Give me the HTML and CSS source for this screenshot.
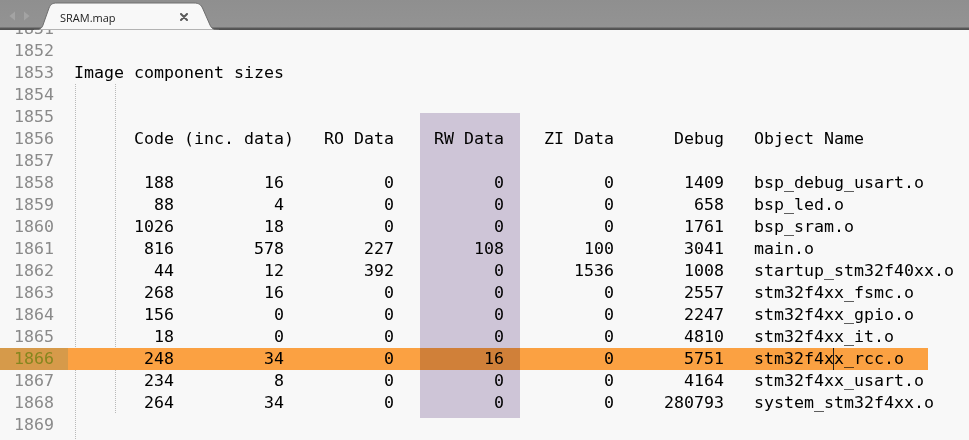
FILE: index.html
```html
<!DOCTYPE html>
<html lang="en">
<head>
<meta charset="utf-8">
<title>SRAM.map</title>
<link rel="stylesheet" href="styles.css">
</head>
<body>
<div class="window">
  <div class="tabbar">
    <div class="nav">
      <svg width="34" height="28" viewBox="0 0 34 28"><path d="M15 11.5 L9.5 16 L15 20.5 Z" fill="#a3a3a3"/><path d="M24 11.5 L29.5 16 L24 20.5 Z" fill="#a3a3a3"/></svg>
    </div>
    <div class="tab">
      <svg class="tab-shape" width="188" height="30" viewBox="0 0 188 30"><path d="M0,30 C6,30 8,28 9,25 L15,8 C16.5,4.5 18,3 23,3 L160,3 C165,3 167,5 168.5,8 L176,25 C177.5,28 179,30 185,30 Z" fill="#f8f8f8" stroke="#6e6e6e" stroke-width="1"/></svg>
      <span class="tab-title">SRAM.map</span>
      <svg class="tab-close" width="8" height="8" viewBox="0 0 8 8"><path d="M1 1 L7 7 M7 1 L1 7" stroke="#5a5a5a" stroke-width="2" stroke-linecap="round"/></svg>
    </div>
  </div>
  <div class="editor">
    <div class="lines">
      <div class="line"><span class="ln">1851</span><span class="code"></span></div>
      <div class="line"><span class="ln">1852</span><span class="code"></span></div>
      <div class="line"><span class="ln">1853</span><span class="code">Image component sizes</span></div>
      <div class="line"><span class="ln">1854</span><span class="code g2"></span></div>
      <div class="line"><span class="ln">1855</span><span class="code g2"></span></div>
      <div class="line"><span class="ln">1856</span><span class="code g2">      Code (inc. data)   RO Data    RW Data    ZI Data      Debug   Object Name</span></div>
      <div class="line"><span class="ln">1857</span><span class="code g2"></span></div>
      <div class="line"><span class="ln">1858</span><span class="code g2 row"><span>188</span><span>16</span><span>0</span><span>0</span><span>0</span><span>1409</span><span class="name">bsp_debug_usart.o</span></span></div>
      <div class="line"><span class="ln">1859</span><span class="code g2 row"><span>88</span><span>4</span><span>0</span><span>0</span><span>0</span><span>658</span><span class="name">bsp_led.o</span></span></div>
      <div class="line"><span class="ln">1860</span><span class="code g2 row"><span>1026</span><span>18</span><span>0</span><span>0</span><span>0</span><span>1761</span><span class="name">bsp_sram.o</span></span></div>
      <div class="line"><span class="ln">1861</span><span class="code g2 row"><span>816</span><span>578</span><span>227</span><span>108</span><span>100</span><span>3041</span><span class="name">main.o</span></span></div>
      <div class="line"><span class="ln">1862</span><span class="code g2 row"><span>44</span><span>12</span><span>392</span><span>0</span><span>1536</span><span>1008</span><span class="name">startup_stm32f40xx.o</span></span></div>
      <div class="line"><span class="ln">1863</span><span class="code g2 row"><span>268</span><span>16</span><span>0</span><span>0</span><span>0</span><span>2557</span><span class="name">stm32f4xx_fsmc.o</span></span></div>
      <div class="line"><span class="ln">1864</span><span class="code g2 row"><span>156</span><span>0</span><span>0</span><span>0</span><span>0</span><span>2247</span><span class="name">stm32f4xx_gpio.o</span></span></div>
      <div class="line"><span class="ln">1865</span><span class="code g2 row"><span>18</span><span>0</span><span>0</span><span>0</span><span>0</span><span>4810</span><span class="name">stm32f4xx_it.o</span></span></div>
      <div class="line hl"><span class="ln">1866</span><span class="code row"><span>248</span><span>34</span><span>0</span><span>16</span><span>0</span><span>5751</span><span class="name">stm32f4x<span class="caret"></span>x_rcc.o</span></span></div>
      <div class="line"><span class="ln">1867</span><span class="code g2 row"><span>234</span><span>8</span><span>0</span><span>0</span><span>0</span><span>4164</span><span class="name">stm32f4xx_usart.o</span></span></div>
      <div class="line"><span class="ln">1868</span><span class="code g2 row"><span>264</span><span>34</span><span>0</span><span>0</span><span>0</span><span>280793</span><span class="name">system_stm32f4xx.o</span></span></div>
      <div class="line"><span class="ln">1869</span><span class="code g1"></span></div>
      <div class="line"><span class="ln"></span><span class="code g1"></span></div>
    </div>
    <div class="col-mark"></div>
  </div>
</div>
</body>
</html>
```
FILE: styles.css
```css
html, body {
  margin: 0;
  padding: 0;
  background: #f8f8f8;
}

.window {
  width: 969px;
  height: 440px;
  overflow: hidden;
  display: flex;
  flex-direction: column;
  background: #f8f8f8;
}

.tabbar {
  flex: 0 0 30px;
  height: 30px;
  display: flex;
  align-items: flex-end;
  background: linear-gradient(to bottom, #8f8f8f 0, #939393 27px, #5a5a5a 28px, #4e4e4e 30px);
}

.nav {
  width: 34px;
  height: 30px;
  flex: 0 0 34px;
}

.nav svg {
  display: block;
}

.tab {
  position: relative;
  width: 188px;
  height: 30px;
  flex: 0 0 188px;
  display: flex;
  align-items: center;
  box-sizing: border-box;
  padding: 4px 34px 0 26px;
}

.tab-shape {
  position: absolute;
  left: 0;
  top: 0;
}

.tab-title {
  position: relative;
  font-family: "Open Sans", "Noto Sans", sans-serif;
  font-size: 11px;
  color: #1c1c1c;
}

.tab-close {
  position: relative;
  margin-left: auto;
  margin-top: -1px;
}

.editor {
  position: relative;
  flex: 1;
  overflow: hidden;
}

.lines {
  margin-top: -12px;
  font-family: "DejaVu Sans Mono", monospace;
  font-size: 16.61px;
  line-height: 22px;
  color: #000;
}

.line {
  display: flex;
  height: 22px;
}

.ln {
  flex: 0 0 74px;
  box-sizing: border-box;
  padding-right: 20px;
  text-align: right;
  color: #8a8a8a;
}

.code {
  flex: 1;
  white-space: pre;
  height: 22px;
}

.g2 {
  background-image:
    linear-gradient(to bottom, #b9b9b9 50%, transparent 50%),
    linear-gradient(to bottom, #b9b9b9 50%, transparent 50%);
  background-size: 1px 2px, 1px 2px;
  background-position: 1px 0, 41px 0;
  background-repeat: repeat-y, repeat-y;
}

.g1 {
  background-image: linear-gradient(to bottom, #b9b9b9 50%, transparent 50%);
  background-size: 1px 2px;
  background-position: 1px 0;
  background-repeat: repeat-y;
}

.row {
  display: grid;
  grid-template-columns: 100px 110px 110px 110px 110px 110px auto;
}

.row > span {
  text-align: right;
}

.row > .name {
  text-align: left;
  padding-left: 30px;
}

.hl {
  background: linear-gradient(to right, #d69a4a 0, #d69a4a 68px, #fba142 68px, #fba142 928px, transparent 928px);
}

.hl .ln {
  color: #86861e;
}

.caret {
  display: inline-block;
  width: 0;
  height: 22px;
  margin-left: -1px;
  border-left: 1px solid #1e1e1e;
  vertical-align: top;
}

.col-mark {
  position: absolute;
  left: 420px;
  top: 83px;
  width: 100px;
  height: 305px;
  background: #d4cbdd;
  mix-blend-mode: multiply;
}
```
